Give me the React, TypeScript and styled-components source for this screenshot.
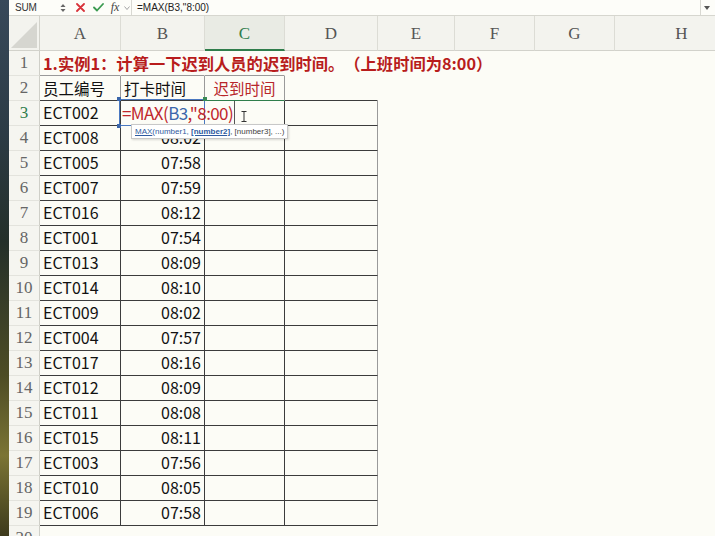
import React from "react";
import styled, { createGlobalStyle, css } from "styled-components";

const Global = createGlobalStyle`
  html, body { margin: 0; padding: 0; overflow: hidden; background: #fcfcf6; }
  body { width: 715px; height: 536px; font-family: "Noto Sans CJK SC", "Noto Sans", sans-serif; }
  * { box-sizing: border-box; }
`;

const Page = styled.div`
  display: flex;
  width: 715px;
  height: 536px;
  overflow: hidden;
`;

const Photo = styled.div`
  width: 9px;
  flex: none;
  background: linear-gradient(180deg, #38495a 0%, #2c3b45 25%, #24302a 45%, #4d4c25 70%, #7b7434 85%, #3d3a1c 100%);
`;

const Sheet = styled.div`
  flex: 1;
  display: flex;
  flex-direction: column;
  min-width: 0;
  overflow: hidden;
  background: #fcfcf6;
`;

const FormulaBar = styled.div`
  height: 16px;
  display: flex;
  align-items: center;
  background: #fdfdf9;
  border-bottom: 1px solid #d6d6cf;
  font-family: "Liberation Sans", sans-serif;
  font-size: 10px;
  color: #333;
`;

const NameBox = styled.div`
  width: 50px;
  padding-left: 6px;
  letter-spacing: -0.2px;
`;

const Spinner = styled.div`
  width: 8px;
  display: flex;
  align-items: center;
  justify-content: center;
`;

const IconBtn = styled.div<{ $w: number }>`
  width: ${(p) => p.$w}px;
  display: flex;
  align-items: center;
  justify-content: center;
`;

const Fx = styled.span`
  font-family: "Liberation Serif", serif;
  font-style: italic;
  font-size: 12px;
  color: #444;
`;

const FormulaInput = styled.div`
  flex: 1;
  height: 100%;
  display: flex;
  align-items: center;
  padding-left: 5px;
  border-left: 1px solid #d8d8d2;
  font-size: 10px;
  color: #222;
`;

const DropBtn = styled.div`
  width: 12px;
  height: 100%;
  border-left: 1px solid #d8d8d2;
  display: flex;
  align-items: center;
  justify-content: center;
  margin-right: 3px;
`;

const Grid = styled.div`
  display: grid;
  grid-template-columns: 31px 81px 84px 80px 93px 77px 80px 80px 134px;
  grid-template-rows: 35px;
  grid-auto-rows: 25px;
`;

const Corner = styled.div`
  background: #f3f3ee;
  border-right: 1px solid #d2d2cb;
  border-bottom: 1px solid #d2d2cb;
  display: flex;
  align-items: flex-end;
  justify-content: flex-end;
  padding: 0 2px 2px 0;
`;

const ColHead = styled.div<{ $active?: boolean }>`
  background: ${(p) => (p.$active ? "#e9ebe4" : "#f3f3ee")};
  border-right: 1px solid #dcdcd5;
  border-bottom: ${(p) => (p.$active ? "2px solid #2f7d4b" : "1px solid #d2d2cb")};
  display: flex;
  align-items: center;
  justify-content: center;
  font-family: "Liberation Serif", serif;
  font-size: 17px;
  color: ${(p) => (p.$active ? "#2f7d4b" : "#555")};
  padding-top: ${(p) => (p.$active ? "3px" : "2px")};
`;

const RowHead = styled.div<{ $active?: boolean }>`
  background: #f5f5f0;
  border-right: 1px solid #cfcfc8;
  border-bottom: 1px solid #e3e3dd;
  display: flex;
  align-items: center;
  justify-content: center;
  padding-bottom: 1px;
  font-family: "Liberation Serif", serif;
  font-size: 17px;
  color: ${(p) => (p.$active ? "#2f7d4b" : "#666")};
`;

const Cell = styled.div<{
  $r?: string;
  $b?: string;
  $bw?: number;
  $align?: "left" | "right" | "center";
  $color?: string;
}>`
  position: relative;
  border-right: 1px solid ${(p) => p.$r ?? "transparent"};
  border-bottom: ${(p) => p.$bw ?? 1}px solid ${(p) => p.$b ?? "transparent"};
  display: flex;
  align-items: center;
  justify-content: ${(p) => (p.$align === "right" ? "flex-end" : p.$align === "center" ? "center" : "flex-start")};
  padding: 0 3px 3px 3px;
  white-space: nowrap;
  font-size: 16px;
  color: ${(p) => p.$color ?? "#111"};
`;

const Title = styled.span`
  font-size: 16.3px;
  font-weight: 700;
  color: #b81c1c;
  text-spacing-trim: space-all;
  padding-top: 2px;
`;

const HeadText = styled.span<{ $red?: boolean }>`
  font-size: 15.5px;
  color: ${(p) => (p.$red ? "#b8262a" : "#111")};
  padding-top: 2px;
`;

const RefBox = styled.div`
  position: absolute;
  left: -2px;
  top: -2px;
  right: -1px;
  bottom: -1px;
  border: 1.5px solid #4a78c0;
  pointer-events: none;
  z-index: 3;
`;

const Handle = styled.span<{ $x: "l" | "r"; $y: "t" | "b"; $green?: boolean }>`
  position: absolute;
  width: 4px;
  height: 4px;
  background: ${(p) => (p.$green ? "#3a8a55" : "#3b66aa")};
  ${(p) => (p.$x === "l" ? css`left: -3px;` : css`right: -3px;`)}
  ${(p) => (p.$y === "t" ? css`top: -3px;` : css`bottom: -3px;`)}
`;

const Editor = styled.div`
  position: absolute;
  left: 1px;
  top: 0;
  height: 24px;
  display: flex;
  align-items: center;
  padding: 0 1px 2px 0;
  border-right: 1px solid #555;
  font-size: 17px;
  letter-spacing: -0.6px;
  color: #c0262c;
  z-index: 4;
  white-space: nowrap;
`;

const RefText = styled.span`
  color: #3b66aa;
`;

const Tooltip = styled.div`
  position: absolute;
  left: 10px;
  top: 23px;
  height: 15px;
  padding: 0 3px;
  display: flex;
  align-items: center;
  background: #fff;
  border: 1px solid #c8c8c8;
  box-shadow: 1px 1px 2px rgba(0, 0, 0, 0.15);
  font-family: "Liberation Sans", sans-serif;
  font-size: 8px;
  color: #444;
  white-space: pre;
  z-index: 5;
`;

const TipLink = styled.span<{ $bold?: boolean; $u?: boolean }>`
  color: #2f5aa0;
  text-decoration: ${(p) => (p.$u ? "underline" : "none")};
  font-weight: ${(p) => (p.$bold ? 700 : 400)};
`;

const IBeam = styled.div`
  position: absolute;
  left: 36px;
  top: 2px;
  z-index: 6;
`;

const data: [string, string][] = [
  ["ECT002", ""],
  ["ECT008", "08:02"],
  ["ECT005", "07:58"],
  ["ECT007", "07:59"],
  ["ECT016", "08:12"],
  ["ECT001", "07:54"],
  ["ECT013", "08:09"],
  ["ECT014", "08:10"],
  ["ECT009", "08:02"],
  ["ECT004", "07:57"],
  ["ECT017", "08:16"],
  ["ECT012", "08:09"],
  ["ECT011", "08:08"],
  ["ECT015", "08:11"],
  ["ECT003", "07:56"],
  ["ECT010", "08:05"],
  ["ECT006", "07:58"],
];

const DARK = "#3c3c3c";
const GRAY = "#9a9a9a";
const letters = ["A", "B", "C", "D", "E", "F", "G", "H"];

function EmptyTail() {
  return (
    <>
      <Cell />
      <Cell />
      <Cell />
      <Cell />
    </>
  );
}

export default function App() {
  return (
    <>
      <Global />
      <Page>
        <Photo />
        <Sheet>
          <FormulaBar>
            <NameBox>SUM</NameBox>
            <Spinner>
              <svg width="6" height="10" viewBox="0 0 6 10">
                <path d="M3 1 L5.5 4 L0.5 4 Z" fill="#666" />
                <path d="M3 9 L5.5 6 L0.5 6 Z" fill="#666" />
              </svg>
            </Spinner>
            <IconBtn $w={4} />
            <IconBtn $w={18}>
              <svg width="9" height="9" viewBox="0 0 9 9">
                <path d="M1 1 L8 8 M8 1 L1 8" stroke="#d8323a" strokeWidth="1.8" strokeLinecap="round" />
              </svg>
            </IconBtn>
            <IconBtn $w={19}>
              <svg width="11" height="9" viewBox="0 0 11 9">
                <path d="M1 4.5 L4 7.5 L10 1" stroke="#3a9a50" strokeWidth="1.8" fill="none" strokeLinecap="round" strokeLinejoin="round" />
              </svg>
            </IconBtn>
            <IconBtn $w={14}>
              <Fx>fx</Fx>
            </IconBtn>
            <IconBtn $w={9}>
              <svg width="6" height="4" viewBox="0 0 6 4">
                <path d="M0.5 0.5 L3 3.5 L5.5 0.5" stroke="#999" strokeWidth="0.9" fill="none" />
              </svg>
            </IconBtn>
            <FormulaInput>=MAX(B3,"8:00)</FormulaInput>
            <DropBtn>
              <svg width="6" height="4" viewBox="0 0 6 4">
                <path d="M0 0 L6 0 L3 4 Z" fill="#555" />
              </svg>
            </DropBtn>
          </FormulaBar>
          <Grid>
            <Corner>
              <svg width="26" height="26" viewBox="0 0 26 26">
                <path d="M26 0 L26 26 L0 26 Z" fill="#d6d6d0" />
              </svg>
            </Corner>
            {letters.map((l) => (
              <ColHead key={l} $active={l === "C"}>
                {l}
              </ColHead>
            ))}

            {/* row 1 */}
            <RowHead>1</RowHead>
            <Cell $b={GRAY}>
              <Title>1.实例1：计算一下迟到人员的迟到时间。（上班时间为8:00）</Title>
            </Cell>
            <Cell $b={GRAY} />
            <Cell $b={GRAY} />
            <Cell />
            <EmptyTail />

            {/* row 2 */}
            <RowHead>2</RowHead>
            <Cell $r={GRAY} $b={DARK}>
              <HeadText>员工编号</HeadText>
            </Cell>
            <Cell $r={GRAY} $b={DARK}>
              <HeadText>打卡时间</HeadText>
            </Cell>
            <Cell $r={GRAY} $b="#2f7d4b" $align="center">
              <HeadText $red>迟到时间</HeadText>
            </Cell>
            <Cell $b={DARK} />
            <EmptyTail />

            {data.map(([id, t], i) => {
              const row = i + 3;
              return (
                <React.Fragment key={id}>
                  <RowHead $active={row === 3}>{row}</RowHead>
                  <Cell $r={DARK} $b={DARK}>{id}</Cell>
                  {row === 3 ? (
                    <Cell $r={DARK} $b={DARK}>
                      <RefBox>
                        <Handle $x="l" $y="t" />
                        <Handle $x="r" $y="t" $green />
                        <Handle $x="l" $y="b" />
                        <Handle $x="r" $y="b" $green />
                      </RefBox>
                      <Editor>
                        =MAX(<RefText>B3</RefText>,"8:00)
                      </Editor>
                      <Tooltip>
                        <TipLink $u>MAX</TipLink>
                        <TipLink>{"(number1, "}</TipLink>
                        <TipLink $bold $u>[number2]</TipLink>
                        <span>{", [number3], ...)"}</span>
                      </Tooltip>
                    </Cell>
                  ) : (
                    <Cell $r={DARK} $b={DARK} $align="right">
                      {t}
                    </Cell>
                  )}
                  <Cell $r={DARK} $b={DARK}>
                    {row === 3 && (
                      <IBeam>
                        <svg width="6" height="11" viewBox="0 0 6 11">
                          <path d="M0.5 0.5 H5.5 M3 0.5 V10.5 M0.5 10.5 H5.5" stroke="#333" strokeWidth="1" fill="none" />
                        </svg>
                      </IBeam>
                    )}
                  </Cell>
                  <Cell $r={GRAY} $b={DARK} />
                  <EmptyTail />
                </React.Fragment>
              );
            })}

            <RowHead>20</RowHead>
            <Cell />
            <Cell />
            <Cell />
            <Cell />
            <EmptyTail />
          </Grid>
        </Sheet>
      </Page>
    </>
  );
}
